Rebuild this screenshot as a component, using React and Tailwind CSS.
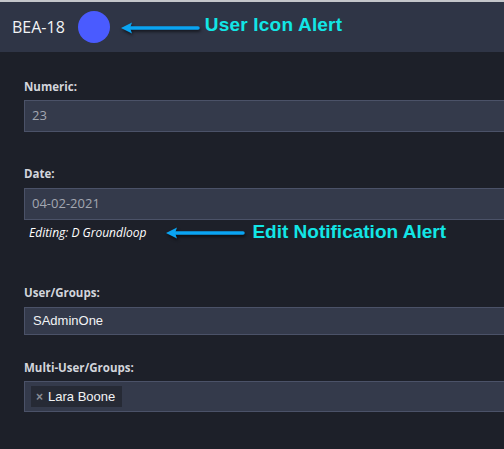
import React from "react";

function Arrow({ width }) {
  return (
    <svg width={width} height="16" viewBox={`0 0 ${width} 16`} className="block" style={{ filter: "drop-shadow(1px 2px 1.5px rgba(0,0,0,0.6))" }}>
      <line x1="8" y1="8" x2={width - 2} y2="8" stroke="#0aa4f2" strokeWidth="3.5" strokeLinecap="round" />
      <polygon points={`1,8 12,2.5 10,8 12,13.5`} fill="#0aa4f2" />
    </svg>
  );
}

function Label({ children }) {
  return (
    <div className="text-[11.5px] h-[11px] font-bold text-[#d3d5dc] leading-[11px]" style={{ fontFamily: "'Open Sans', sans-serif" }}>
      {children}
    </div>
  );
}

export default function App() {
  return (
    <div className="w-[504px] h-[449px] bg-[#1d2029] overflow-hidden" style={{ fontFamily: "'Liberation Sans', Arial, sans-serif" }}>
      <div className="h-[2px] bg-[#c4c6ca]" />
      <div className="h-[50px] bg-[#2f3546] flex items-center pl-3">
        <span className="text-[16px] text-[#f2f3f5] -mt-[1px]" style={{ fontFamily: "'Open Sans', sans-serif" }}>BEA-18</span>
        <div className="ml-[13px] w-[32px] h-[32px] rounded-full bg-[#4a5bff]" />
        <div className="ml-[10px] mt-[2px]"><Arrow width={80} /></div>
        <span className="ml-[5px] text-[19px] tracking-[0.2px] font-bold text-[#12e6e6] -mt-[4px]">User Icon Alert</span>
      </div>
      <div className="pl-6">
        <div className="pt-[29px]"><Label>Numeric:</Label></div>
        <div className="mt-[8px] h-[32px] bg-[#343a4b] border border-[#4b5268] border-r-0 flex items-center pl-[7px] text-[13px] text-[#a3a7b1]" style={{ fontFamily: "'Open Sans', sans-serif" }}>23</div>
        <div className="mt-[36px]"><Label>Date:</Label></div>
        <div className="mt-[9px] h-[32px] bg-[#343a4b] border border-[#4b5268] border-r-0 flex items-center pl-[7px] text-[13px] text-[#a3a7b1]" style={{ fontFamily: "'Open Sans', sans-serif" }}>04-02-2021</div>
        <div className="flex items-center mt-[4px] h-[18px]">
          <span className="ml-[5px] text-[12px] italic text-white" style={{ fontFamily: "'Open Sans', sans-serif" }}>Editing: D Groundloop</span>
          <div className="ml-[19px]"><Arrow width={80} /></div>
          <span className="ml-[7px] text-[19px] font-bold text-[#12e6e6] -mt-[2px]">Edit Notification Alert</span>
        </div>
        <div className="mt-[45px]"><Label>User/Groups:</Label></div>
        <div className="mt-[9px] h-[28px] bg-[#343a4b] border border-[#4b5268] border-r-0 flex items-center pl-[8px] text-[13px] text-[#f2f3f5]">SAdminOne</div>
        <div className="mt-[27px]"><Label>Multi-User/Groups:</Label></div>
        <div className="mt-[8px] h-[31px] bg-[#343a4b] border border-[#4b5268] border-r-0 flex items-center pl-[6px]">
          <div className="h-[21px] bg-[#262a35] flex items-center pl-[5px] pr-[7px] gap-[5px]">
            <span className="text-[12px] font-bold text-[#8a8d95] leading-none">×</span>
            <span className="text-[13px] text-[#f2f3f5]">Lara Boone</span>
          </div>
        </div>
      </div>
    </div>
  );
}
